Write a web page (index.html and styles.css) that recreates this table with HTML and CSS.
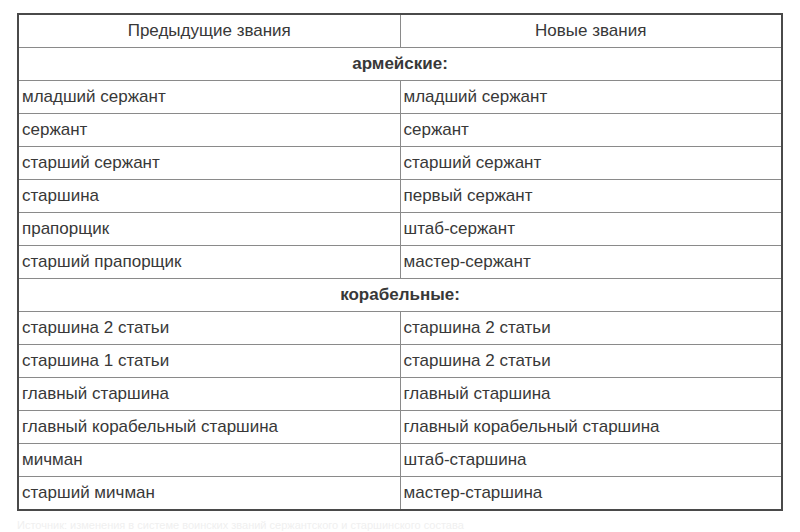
FILE: index.html
```html
<!DOCTYPE html>
<html lang="ru">
<head>
<meta charset="utf-8">
<link rel="stylesheet" href="styles.css">
</head>
<body>
<div class="wrap">
<table class="ranks">
<thead>
<tr><th>Предыдущие звания</th><th>Новые звания</th></tr>
</thead>
<tbody>
<tr class="section"><td colspan="2">армейские:</td></tr>
<tr><td>младший сержант</td><td>младший сержант</td></tr>
<tr><td>сержант</td><td>сержант</td></tr>
<tr><td>старший сержант</td><td>старший сержант</td></tr>
<tr><td>старшина</td><td>первый сержант</td></tr>
<tr><td>прапорщик</td><td>штаб-сержант</td></tr>
<tr><td>старший прапорщик</td><td>мастер-сержант</td></tr>
<tr class="section"><td colspan="2">корабельные:</td></tr>
<tr><td>старшина 2 статьи</td><td>старшина 2 статьи</td></tr>
<tr><td>старшина 1 статьи</td><td>старшина 2 статьи</td></tr>
<tr><td>главный старшина</td><td>главный старшина</td></tr>
<tr><td>главный корабельный старшина</td><td>главный корабельный старшина</td></tr>
<tr><td>мичман</td><td>штаб-старшина</td></tr>
<tr><td>старший мичман</td><td>мастер-старшина</td></tr>
</tbody>
</table>
<p class="after">Источник: изменения в системе воинских званий сержантского и старшинского состава</p>
</div>
</body>
</html>
```
FILE: styles.css
```css
html, body {
  margin: 0;
  padding: 0;
  background: #fff;
}
.wrap {
  padding: 13px 0 0 17px;
  font-family: "Liberation Sans", Arial, sans-serif;
  color: #383838;
}
.ranks {
  width: 766px;
  border-collapse: collapse;
  table-layout: fixed;
  border: 2px solid #4a4a4a;
  font-size: 17px;
}
.ranks th, .ranks td {
  border: 1px solid #8a8a8a;
  height: 32px;
  padding: 0 0 0 3px;
  text-align: left;
  vertical-align: middle;
  font-weight: normal;
  line-height: 18px;
}
.ranks th {
  text-align: center;
  padding: 0;
}
.ranks td:first-child {
  width: 379px;
}
.ranks .section td {
  text-align: center;
  font-weight: bold;
  padding: 0;
}
.after {
  margin: 8px 0 0 0;
  font-size: 11px;
  line-height: 12px;
  color: #f0f0f0;
}
```
